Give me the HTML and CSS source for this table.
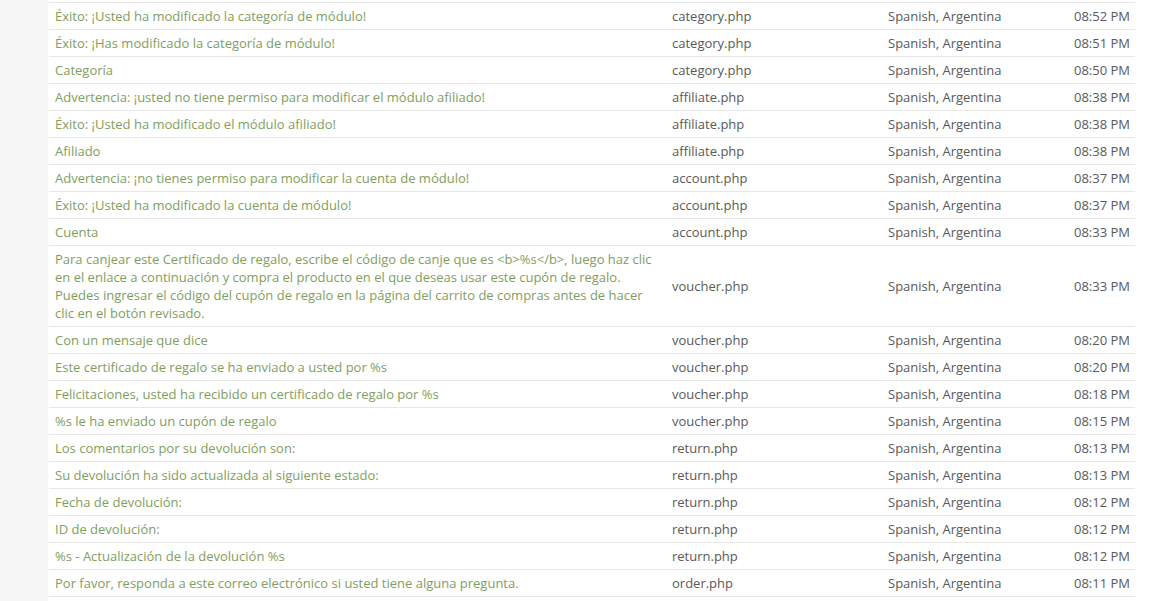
FILE: index.html
```html
<!DOCTYPE html>
<html lang="es">
<head>
<meta charset="utf-8">
<title>Traducciones</title>
<link rel="stylesheet" href="styles.css">
</head>
<body>
<div class="layout">
  <aside class="side"></aside>
  <main class="main">
    <table class="log">
      <colgroup>
        <col class="c-text"><col class="c-file"><col class="c-lang"><col class="c-time">
      </colgroup>
      <tbody>
        <tr><td class="msg">Éxito: ¡Usted ha modificado la categoría de módulo!</td><td>category.php</td><td>Spanish, Argentina</td><td class="time">08:52 PM</td></tr>
        <tr><td class="msg">Éxito: ¡Has modificado la categoría de módulo!</td><td>category.php</td><td>Spanish, Argentina</td><td class="time">08:51 PM</td></tr>
        <tr><td class="msg">Categoría</td><td>category.php</td><td>Spanish, Argentina</td><td class="time">08:50 PM</td></tr>
        <tr><td class="msg">Advertencia: ¡usted no tiene permiso para modificar el módulo afiliado!</td><td>affiliate.php</td><td>Spanish, Argentina</td><td class="time">08:38 PM</td></tr>
        <tr><td class="msg">Éxito: ¡Usted ha modificado el módulo afiliado!</td><td>affiliate.php</td><td>Spanish, Argentina</td><td class="time">08:38 PM</td></tr>
        <tr><td class="msg">Afiliado</td><td>affiliate.php</td><td>Spanish, Argentina</td><td class="time">08:38 PM</td></tr>
        <tr><td class="msg">Advertencia: ¡no tienes permiso para modificar la cuenta de módulo!</td><td>account.php</td><td>Spanish, Argentina</td><td class="time">08:37 PM</td></tr>
        <tr><td class="msg">Éxito: ¡Usted ha modificado la cuenta de módulo!</td><td>account.php</td><td>Spanish, Argentina</td><td class="time">08:37 PM</td></tr>
        <tr><td class="msg">Cuenta</td><td>account.php</td><td>Spanish, Argentina</td><td class="time">08:33 PM</td></tr>
        <tr><td class="msg">Para canjear este Certificado de regalo, escribe el código de canje que es &lt;b&gt;%s&lt;/b&gt;, luego haz clic<br>en el enlace a continuación y compra el producto en el que deseas usar este cupón de regalo.<br>Puedes ingresar el código del cupón de regalo en la página del carrito de compras antes de hacer<br>clic en el botón revisado.</td><td>voucher.php</td><td>Spanish, Argentina</td><td class="time">08:33 PM</td></tr>
        <tr><td class="msg">Con un mensaje que dice</td><td>voucher.php</td><td>Spanish, Argentina</td><td class="time">08:20 PM</td></tr>
        <tr><td class="msg">Este certificado de regalo se ha enviado a usted por %s</td><td>voucher.php</td><td>Spanish, Argentina</td><td class="time">08:20 PM</td></tr>
        <tr><td class="msg">Felicitaciones, usted ha recibido un certificado de regalo por %s</td><td>voucher.php</td><td>Spanish, Argentina</td><td class="time">08:18 PM</td></tr>
        <tr><td class="msg">%s le ha enviado un cupón de regalo</td><td>voucher.php</td><td>Spanish, Argentina</td><td class="time">08:15 PM</td></tr>
        <tr><td class="msg">Los comentarios por su devolución son:</td><td>return.php</td><td>Spanish, Argentina</td><td class="time">08:13 PM</td></tr>
        <tr><td class="msg">Su devolución ha sido actualizada al siguiente estado:</td><td>return.php</td><td>Spanish, Argentina</td><td class="time">08:13 PM</td></tr>
        <tr><td class="msg">Fecha de devolución:</td><td>return.php</td><td>Spanish, Argentina</td><td class="time">08:12 PM</td></tr>
        <tr><td class="msg">ID de devolución:</td><td>return.php</td><td>Spanish, Argentina</td><td class="time">08:12 PM</td></tr>
        <tr><td class="msg">%s - Actualización de la devolución %s</td><td>return.php</td><td>Spanish, Argentina</td><td class="time">08:12 PM</td></tr>
        <tr><td class="msg">Por favor, responda a este correo electrónico si usted tiene alguna pregunta.</td><td>order.php</td><td>Spanish, Argentina</td><td class="time">08:11 PM</td></tr>
      </tbody>
    </table>
  </main>
</div>
</body>
</html>
```
FILE: styles.css
```css
html, body {
  margin: 0;
  padding: 0;
  background: #ffffff;
}
body {
  font-family: "Open Sans", "DejaVu Sans", sans-serif;
  font-size: 13px;
  color: #595959;
}
.layout {
  display: flex;
  min-height: 601px;
}
.side {
  width: 48px;
  flex: 0 0 48px;
  background: #f6f6f6;
}
.main {
  flex: 1;
  background: #ffffff;
  padding: 2px 32px 0 1px;
}
.log {
  width: 1086px;
  border-collapse: collapse;
  table-layout: fixed;
}
.c-text { width: 617px; }
.c-file { width: 216px; }
.c-lang { width: 160px; }
.c-time { width: 93px; }
.log td {
  border-top: 1px solid #e8e8e8;
  border-bottom: 1px solid #e8e8e8;
  padding: 4px 6px;
  line-height: 18px;
  vertical-align: middle;
  white-space: nowrap;
}
.log td.msg {
  color: #7f9e60;
}
.log td.time {
  text-align: right;
  padding-right: 5px;
}
```
